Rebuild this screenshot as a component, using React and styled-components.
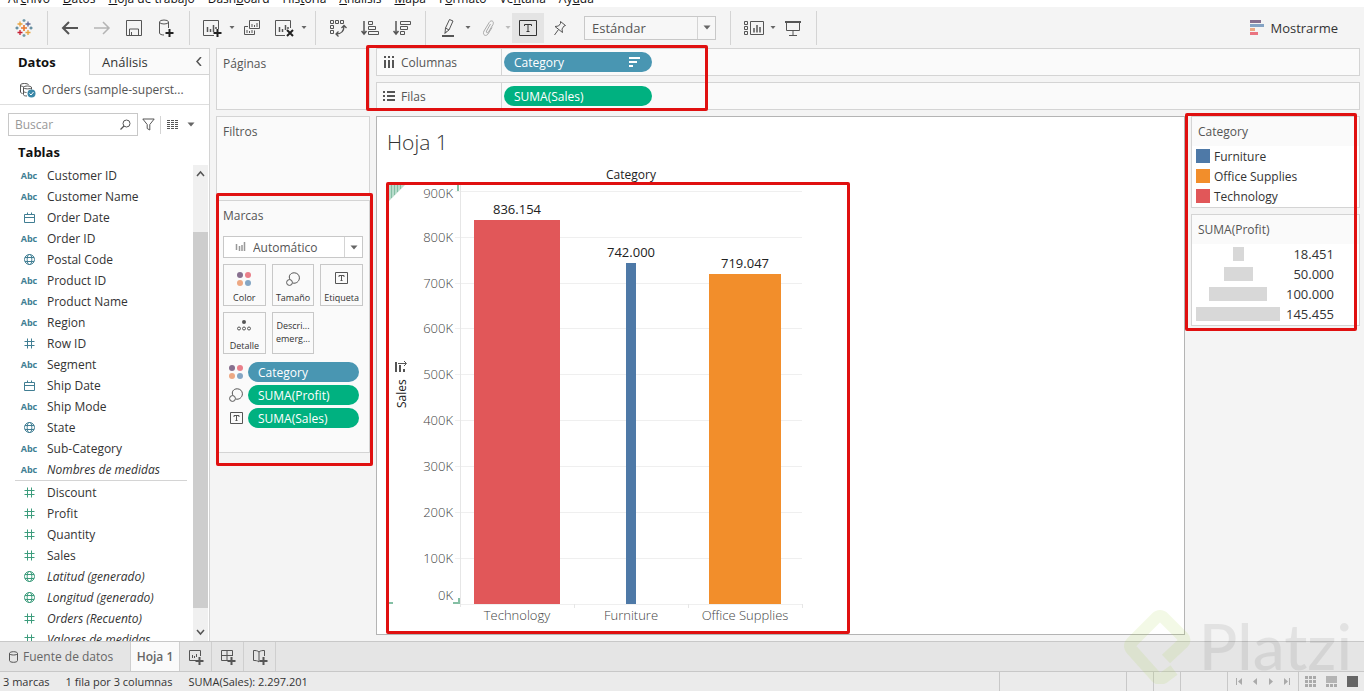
import React from 'react';
import styled, { createGlobalStyle, css } from 'styled-components';

const GlobalStyle = createGlobalStyle`
  * {
    box-sizing: border-box;
  }
  body {
    margin: 0;
    overflow: hidden;
  }
  body, button, input, select {
    font-family: 'Open Sans', 'Noto Sans', sans-serif;
    font-size: 12px;
    color: #333;
  }
  button {
    border: 0;
    padding: 0;
    background: none;
  }
  svg {
    display: block;
    flex: none;
  }
`;

const Page = styled.div`
  height: 100vh;
  display: flex;
  flex-direction: column;
  background: #f4f4f4;
  position: relative;
  overflow: hidden;
`;

const MenuBar = styled.nav`
  height: 7px;
  flex: none;
  display: flex;
  align-items: flex-end;
  gap: 13px;
  padding-left: 8px;
  background: #fff;
  overflow: hidden;
`;

const MenuItem = styled.a`
  color: #111;
  line-height: 16px;
  text-decoration: none;
  white-space: nowrap;
`;

const Toolbar = styled.div`
  height: 41px;
  flex: none;
  display: flex;
  align-items: center;
  padding-left: 8px;
  padding-right: 26px;
`;

const ToolButton = styled.button`
  width: 32px;
  height: 30px;
  display: flex;
  align-items: center;
  justify-content: center;
  background: ${props => (props.$active ? '#e4e4e4' : 'none')};
`;

const CaretButton = styled.button`
  width: 8px;
  height: 30px;
  display: flex;
  align-items: center;
  justify-content: center;
`;

const Separator = styled.div`
  width: 1px;
  height: 34px;
  margin: 0 6px 0 7px;
  background: #d4d4d4;
`;

const SelectBox = styled.label`
  position: relative;
  display: flex;
  height: ${props => (props.$small ? '22px' : '24px')};
  width: ${props => (props.$small ? '100%' : '132px')};
  margin: ${props => (props.$small ? '0' : '0 7px 0 8px')};
  background: ${props => (props.$small ? '#fff' : '#f7f7f7')};
  border: 1px solid #c8c8c8;

  select {
    flex: 1;
    appearance: none;
    border: 0;
    background: none;
    padding-left: ${props => (props.$small ? '29px' : '7px')};
    font-size: ${props => (props.$small ? '12px' : '13px')};
    color: #555;
  }
`;

const SelectIcon = styled.span`
  position: absolute;
  left: 11px;
  top: 4px;
`;

const SelectCaret = styled.span`
  position: absolute;
  right: 0;
  top: 0;
  bottom: 0;
  width: 18px;
  border-left: 1px solid #d4d4d4;
  display: flex;
  align-items: center;
  justify-content: center;
  pointer-events: none;
`;

const ShowMe = styled.button`
  margin-left: auto;
  display: flex;
  align-items: center;
  gap: 6px;
  font-size: 13px;
`;

const Body = styled.div`
  flex: 1;
  min-height: 0;
  display: flex;
`;

const Sidebar = styled.aside`
  width: 210px;
  flex: none;
  display: flex;
  flex-direction: column;
  background: #fff;
  border-right: 1px solid #d4d4d4;
  border-top: 1px solid #d4d4d4;
`;

const SideTabs = styled.div`
  display: flex;
  height: 26px;
  flex: none;
`;

const SideTab = styled.button`
  display: flex;
  align-items: center;
  font-size: 13px;

  ${props =>
    props.$active
      ? css`
          width: 89px;
          padding-left: 18px;
          font-weight: 700;
          color: #111;
        `
      : css`
          flex: 1;
          justify-content: space-between;
          padding: 0 6px 0 12px;
          background: #fafafa;
          border-left: 1px solid #d4d4d4;
          border-bottom: 1px solid #d4d4d4;
        `}
`;

const Source = styled.div`
  height: 30px;
  flex: none;
  display: flex;
  align-items: center;
  gap: 6px;
  padding-left: 19px;
  color: #555;
  border-bottom: 1px solid #dedede;
`;

const SearchRow = styled.div`
  display: flex;
  align-items: center;
  padding: 8px 8px 4px;
  flex: none;
`;

const SearchBox = styled.label`
  width: 130px;
  height: 23px;
  display: flex;
  align-items: center;
  padding: 0 6px;
  border: 1px solid #c8c8c8;

  input {
    flex: 1;
    width: 0;
    border: 0;
    padding: 0;
    outline: 0;
    background: none;
  }
  input::placeholder {
    color: #999;
    opacity: 1;
  }
`;

const IconButton = styled.button`
  height: 20px;
  display: flex;
  align-items: center;
  padding: 0 4px;
`;

const Divider = styled.div`
  width: 1px;
  height: 18px;
  margin: 0 2px 0 1px;
  background: #d4d4d4;
`;

const SideTitle = styled.h2`
  margin: 0;
  padding: 0 0 1px 18px;
  font-size: 13px;
  line-height: 24px;
  color: #111;
`;

const FieldArea = styled.div`
  flex: 1;
  min-height: 0;
  display: flex;
`;

const FieldList = styled.ul`
  flex: 1;
  margin: 0;
  padding: 0 6px 0 15px;
  list-style: none;
  overflow: hidden;
`;

const Field = styled.li`
  height: 21px;
  display: flex;
  align-items: center;
  font-style: ${props => (props.$generated ? 'italic' : 'normal')};
  color: #333;
`;

const FieldRule = styled.li`
  height: 2px;
  border-top: 1px solid #d4d4d4;
`;

const FieldIcon = styled.span`
  width: 28px;
  margin-right: 4px;
  display: flex;
  justify-content: center;
  font-size: 9px;
  font-weight: 700;
  font-style: normal;
  color: ${props => (props.$measure ? '#3c9c7c' : '#417e93')};
`;

const ScrollTrack = styled.div`
  width: 15px;
  margin-right: 1px;
  display: flex;
  flex-direction: column;
  background: #f0f0f0;
`;

const ScrollButton = styled.button`
  height: 17px;
  display: flex;
  align-items: center;
  justify-content: center;
`;

const ScrollSpace = styled.div`
  flex: ${props => props.$size};
  background: ${props => (props.$thumb ? '#cdcdcd' : 'none')};
`;

const Main = styled.main`
  flex: 1;
  min-width: 0;
  display: grid;
  grid-template-columns: 154px minmax(0, 1fr) 169px;
  grid-template-rows: 62px minmax(0, 1fr);
  gap: 6px;
  padding: 0 4px 6px 6px;
`;

const Card = styled.section`
  position: relative;
  height: ${props => props.$height || 'auto'};
  padding: 0 6px;
  background: #fafafa;
  border: 1px solid #d4d4d4;
`;

const CardTitle = styled.h3`
  margin: 0;
  font-size: 12px;
  font-weight: 400;
  line-height: 30px;
  color: #555;
`;

const Cards = styled.div`
  display: flex;
  flex-direction: column;
  gap: 6px;
`;

const Shelves = styled.div`
  position: relative;
  grid-column: 2 / 4;
  display: flex;
  flex-direction: column;
  gap: 6px;
`;

const Shelf = styled.div`
  height: 28px;
  display: flex;
  align-items: center;
  background: #fafafa;
  border: 1px solid #d4d4d4;
`;

const ShelfLabel = styled.div`
  width: 125px;
  height: 100%;
  margin-right: 2px;
  padding-left: 6px;
  display: flex;
  align-items: center;
  gap: 6px;
  color: #555;
  border-right: 1px solid #d4d4d4;
`;

const Pill = styled.button`
  width: ${props => props.$width};
  height: 20px;
  padding: 0 12px 0 10px;
  border-radius: 10px;
  display: flex;
  align-items: center;
  justify-content: space-between;
  font-weight: 500;
  color: #fff;
  background: ${props => (props.$measure ? '#00b180' : '#4996b2')};
`;

const MarkOptions = styled.div`
  padding-top: 5px;
`;

const MarkGrid = styled.div`
  display: grid;
  grid-template-columns: repeat(3, 1fr);
  gap: 6px;
  margin: 6px 0 8px;
`;

const MarkButton = styled.button`
  height: 42px;
  display: flex;
  flex-direction: column;
  align-items: center;
  justify-content: ${props => (props.$textOnly ? 'center' : 'space-between')};
  padding: ${props => (props.$textOnly ? '0 0 2px' : '7px 0 1px')};
  font-size: 9px;
  line-height: 13px;
  border: 1px solid #c8c8c8;
`;

const MarkRow = styled.div`
  display: flex;
  align-items: center;
  gap: 3px;
  margin-bottom: 3px;
`;

const MarkIcon = styled.span`
  width: 22px;
  padding-left: 4px;
  display: flex;
  justify-content: center;
`;

const Annotation = styled.div`
  position: absolute;
  inset: ${props => props.$inset};
  width: ${props => props.$width || 'auto'};
  border: 3px solid #e01010;
  border-radius: 2px;
  pointer-events: none;
`;

const Sheet = styled.section`
  position: relative;
  background: #fff;
  border: 1px solid #b4b4b4;
  padding: 11px 0 0 10px;
  overflow: hidden;
`;

const SheetTitle = styled.h1`
  margin: 0;
  font-size: 21px;
  font-weight: 300;
  line-height: 28px;
  color: #333;
`;

const ChartArea = styled.div`
  margin-top: 9px;
`;

const ChartText = styled.text`
  font-size: ${props => (props.$title ? '12px' : '13px')};
  font-weight: ${props => (props.$strong ? 400 : 300)};
  fill: ${props => (props.$strong ? '#222' : '#444')};
`;

const Legends = styled.div`
  position: relative;
  align-self: start;
  display: flex;
  flex-direction: column;
  gap: 6px;
`;

const Legend = styled.section`
  background: #fff;
  border: 1px solid #d4d4d4;
  padding-bottom: 1px;

  h3 {
    padding-left: 6px;
    line-height: 29px;
    background: #fafafa;
  }
`;

const LegendRow = styled.div`
  height: 20px;
  display: flex;
  align-items: center;
  gap: 4px;
  padding: 0 25px 0 4px;
`;

const Swatch = styled.span`
  width: 14px;
  height: 14px;
  background: ${props => props.$color};
`;

const SizeCell = styled.span`
  width: 84px;
  display: flex;
  justify-content: center;
`;

const SizeBar = styled.span`
  height: 14px;
  background: #d8d8d8;
`;

const SizeValue = styled.span`
  flex: 1;
  font-size: 13px;
  text-align: right;
`;

const SheetTabs = styled.div`
  height: 31px;
  flex: none;
  display: flex;
  background: #e5e5e5;
  border-top: 1px solid #c8c8c8;
  border-bottom: 1px solid #c8c8c8;
`;

const SheetTab = styled.button`
  width: ${props => props.$width};
  display: flex;
  align-items: center;
  justify-content: ${props => (props.$source ? 'flex-start' : 'center')};
  gap: 5px;
  padding-left: ${props => (props.$source ? '9px' : '0')};
  color: #666;
  font-weight: ${props => (props.$active ? 600 : 400)};
  background: ${props => (props.$active ? '#fafafa' : 'none')};
  border-right: 1px solid #cfcfcf;
`;

const StatusBar = styled.footer`
  height: 19px;
  flex: none;
  display: flex;
  align-items: center;
  gap: 16px;
  padding-left: 3px;
  background: #ebebeb;
  font-size: 11px;
`;

const StatusCells = styled.div`
  margin-left: auto;
  height: 100%;
  display: flex;
`;

const StatusCell = styled.div`
  width: ${props => props.$width};
  display: flex;
  align-items: center;
  justify-content: center;
  gap: ${props => props.$gap || '0'};
  border-left: 1px solid #c8c8c8;
`;

const Watermark = styled.div`
  position: absolute;
  right: 12px;
  bottom: 7px;
  display: flex;
  align-items: center;
  gap: 8px;
  font-family: Lato, sans-serif;
  font-size: 64px;
  font-weight: 500;
  line-height: 76px;
  color: rgba(0, 0, 0, 0.07);
  pointer-events: none;
`;

/* icons */

const Icon = ({ size = 18, w, h, color = '#555', stroke = 1, children }) => (
  <svg
    width={w || size}
    height={h || size}
    viewBox={`0 0 ${w || size} ${h || size}`}
    fill="none"
    stroke={color}
    strokeWidth={stroke}
    aria-hidden="true"
  >
    {children}
  </svg>
);

const Caret = ({ color = '#666', big }) => (
  <Icon w={8} h={5} color="none">
    <path d={big ? 'M0.500 0.500h7L4 4.500z' : 'M1.5 1h5L4 4z'} fill={color} />
  </Icon>
);

const LogoIcon = () => (
  <Icon size={18} stroke={1.3}>
    <path d="M9 6v6M6 9h6" stroke="#e8762d" strokeWidth="1.6" />
    <path d="M5 2.5v5M2.500 5h5M13 11v5M10.500 13.500h5" stroke="#e8a33d" />
    <path d="M13 2.500v5M10.500 5h5" stroke="#5c6692" />
    <path d="M5 11v5M2.500 13.500h5" stroke="#c72035" />
    <path d="M9 0v3M7.500 1.500h3M9 15v3M7.500 16.500h3" stroke="#7199a6" />
    <path d="M2 7.500v3M.5 9h3M16 7.500v3M14.500 9h3" stroke="#5b879b" />
  </Icon>
);

const ArrowIcon = ({ forward }) => (
  <Icon w={18} h={16} color={forward ? '#b4b4b4' : '#555'} stroke={forward ? 1.5 : 2}>
    <path d={forward ? 'M1 8h15M10 2l6 6-6 6' : 'M17 8H2M8 2L2 8l6 6'} />
  </Icon>
);

const SaveIcon = () => (
  <Icon size={18}>
    <path d="M1.500 1.500h15v15h-15zM4.500 16v-6h9v6M6.500 16v-3" />
  </Icon>
);

const AddDataIcon = () => (
  <Icon size={18}>
    <ellipse cx="7" cy="3" rx="4.500" ry="2" />
    <path d="M2.500 3v11c0 1.200 2 2 4.500 2M11.500 3v6" />
    <path d="M12.500 10v8M8.500 14h8" stroke="#222" strokeWidth="2" />
  </Icon>
);

const AddSheetIcon = () => (
  <Icon w={20} h={20}>
    <path d="M12 17.500H1.500v-15h15V11" />
    <path d="M5.500 9v5M8.500 11v3M11.500 7v7M14 9v2" strokeWidth="1.500" />
    <path d="M15.500 11v8M11.500 15h8" stroke="#222" strokeWidth="2" />
  </Icon>
);

const DuplicateIcon = () => (
  <Icon w={18} h={18}>
    <path d="M6.500 1.500h10v8h-10zM5 7.500H1.500v8h10v-4" />
    <path d="M9 5v3M11.500 6v2M14 4v4M4 11v3M6.500 12v2M9 11v3" />
  </Icon>
);

const ClearIcon = () => (
  <Icon w={20} h={20}>
    <path d="M11 17.500H1.500v-15h15V10" />
    <path d="M5.500 9v5M8.500 11v3M11.500 7v5M14 9v2" strokeWidth="1.500" />
    <path d="M13 12l6 6M19 12l-6 6" stroke="#222" strokeWidth="2" />
  </Icon>
);

const SwapIcon = () => (
  <Icon size={18}>
    <path d="M1.500 1.500h3v3h-3zM6.500 1.500h3v3h-3zM11.500 1.500h3v3h-3zM1.500 6.500h3v3h-3zM1.500 11.500h3v3h-3z" />
    <path d="M7 15c5 0 8-3 8-8M12.500 9L15 6.500 17.500 9M9.500 12.500L7 15l2.500 2.500" strokeWidth="1.300" />
  </Icon>
);

const SortIcon = ({ desc }) => (
  <Icon size={18}>
    <path d="M3 2v13M0.500 12L3 15l2.500-3" strokeWidth="1.500" />
    {desc ? (
      <path d="M7.500 2.500h10v3h-10zM7.500 7.500h7v3h-7zM7.500 12.500h4v3h-4z" />
    ) : (
      <path d="M7.500 2.500h4v3h-4zM7.500 7.500h7v3h-7zM7.500 12.500h10v3h-10z" />
    )}
  </Icon>
);

const PenIcon = () => (
  <Icon w={16} h={20}>
    <path d="M9.500 1.500l3.500 1.500-4 9-4 3 .5-5zM5.500 10l3.500 2M4.500 15.500l2-1.500" />
    <path d="M2 18h12" strokeWidth="2" />
  </Icon>
);

const ClipIcon = () => (
  <Icon w={14} h={18} color="#aaa">
    <path d="M9.500 5L5.500 12c-.8 1.800 1.200 2.600 2 1L12 5.500C13.500 2 10 .5 8.200 3.500L3 12c-2 4 2 6 4 3l4-6.500" />
  </Icon>
);

const TextIcon = ({ small }) =>
  small ? (
    <Icon w={13} h={12} color="#555">
      <path d="M.5 .5h12v11H.5zM4 5V3.500h5V5M6.500 3.500v5M5.500 8.500h2" />
    </Icon>
  ) : (
    <Icon w={18} h={16} color="#333">
      <path d="M.5 .5h17v15H.5zM5.500 6V4.500h7V6M9 4.500v7M7.500 11.500h3" />
    </Icon>
  );

const PinIcon = () => (
  <Icon w={14} h={16}>
    <path d="M7.500 1.500l5 4-1.500 .5-2 3 .5 3.500-7.500-6 3.500-.5 2-2.500zM5.500 9.500L1.500 15" />
  </Icon>
);

const ShowCardsIcon = () => (
  <Icon w={21} h={16}>
    <path d="M1.500 1.500h3v3h-3zM1.500 6.500h3v3h-3zM1.500 11.500h3v3h-3zM7.500 1.500h13v13h-13z" />
    <path d="M11 8v4.500M14 5v7.500M17 7v5.500" strokeWidth="1.500" />
  </Icon>
);

const PresentIcon = () => (
  <Icon w={18} h={18}>
    <path d="M1 3h16" strokeWidth="2" />
    <path d="M2.500 3v8.500h13V3M9 11.500V16M5 16.500h8" />
  </Icon>
);

const ShowMeIcon = () => (
  <Icon w={14} h={16} color="none">
    <path d="M0 0h11v3H0z" fill="#87708f" />
    <path d="M0 4h14v3H0z" fill="#84a3c4" />
    <path d="M0 8h5v3H0z" fill="#eaa884" />
    <path d="M0 12h8v3H0z" fill="#ea7480" />
  </Icon>
);

const SourceIcon = () => (
  <Icon w={17} h={16}>
    <path d="M3.500 11.500c-1.300-.3-2-.8-2-1.500V3c0-2 8-2 8 0M1.500 3c0 1 1.500 1.500 3 1.500M4.500 5.500v7c0 1.200 1.500 1.500 3.500 1.500M4.500 5.500c0-2 8-2 8 0v2M4.500 5.500c0 1.800 8 1.800 8 0M4.500 9c0 1 1.500 1.500 3 1.500" />
    <circle cx="12.500" cy="11.500" r="4" fill="#3b88a8" stroke="none" />
    <path d="M10.500 11.500l1.500 1.500 2.500-3" stroke="#fff" />
  </Icon>
);

const SearchIcon = () => (
  <Icon w={11} h={11}>
    <circle cx="6.500" cy="4.500" r="3.500" />
    <path d="M4 7L.5 10.500" strokeWidth="1.300" />
  </Icon>
);

const FilterIcon = () => (
  <Icon w={13} h={13}>
    <path d="M.8 1h11.400L7.800 6.500V12L5.200 10.500v-4z" />
  </Icon>
);

const ListIcon = () => (
  <Icon w={12} h={10}>
    <path
      d="M0 .5h12M0 2.500h12M0 4.500h12M0 6.500h12M0 8.500h12"
      strokeDasharray="3 1"
    />
  </Icon>
);

const Chevron = ({ d }) => (
  <Icon w={9} h={9} stroke={1.5}>
    <path d={d} />
  </Icon>
);

const HashIcon = () => (
  <Icon w={11} h={11} color="currentColor">
    <path d="M3.500 .5v10M7.500 .5v10M.5 3.500h10M.5 7.500h10" />
  </Icon>
);

const CalendarIcon = () => (
  <Icon w={11} h={11} color="currentColor">
    <path d="M.5 2.500h10v8H.5zM.5 5.500h10M3.500 .5v2M7.500 .5v2" />
  </Icon>
);

const GlobeIcon = () => (
  <Icon w={11} h={11} color="currentColor">
    <circle cx="5.500" cy="5.500" r="5" />
    <ellipse cx="5.500" cy="5.500" rx="2.300" ry="5" />
    <path d="M1 3.500h9M1 7.500h9" />
  </Icon>
);

const ColorIcon = () => (
  <Icon w={14} h={14} color="none">
    <circle cx="3" cy="3" r="3" fill="#87708f" />
    <circle cx="11" cy="3" r="3" fill="#ea7f8a" />
    <circle cx="3" cy="11" r="3" fill="#eda883" />
    <circle cx="11" cy="11" r="3" fill="#84a6c4" />
  </Icon>
);

const SizeIcon = () => (
  <Icon w={14} h={14}>
    <path d="M4 7.500C2 4 4.500 .8 8.200 .8c3 0 5.200 2.200 5.200 5 0 3.600-3.400 6.200-6.700 5.200" />
    <circle cx="3.500" cy="10.500" r="2.900" />
  </Icon>
);

const DetailIcon = () => (
  <Icon w={14} h={11}>
    <circle cx="7" cy="2" r="2" fill="#555" stroke="none" />
    <circle cx="2" cy="8.500" r="1.500" />
    <circle cx="7" cy="8.500" r="1.500" />
    <circle cx="12" cy="8.500" r="1.500" />
  </Icon>
);

const BarsIcon = () => (
  <Icon w={11} h={11} color="#999">
    <path d="M1.500 3v6M4.500 5v5M7 4v6M9.500 1v9" strokeWidth="1.500" />
  </Icon>
);

const ColumnsIcon = () => (
  <Icon w={12} h={12} stroke={2}>
    <path d="M2 0v2M6 0v2M10 0v2M2 4v8M6 4v8M10 4v8" />
  </Icon>
);

const RowsIcon = () => (
  <Icon w={12} h={12} stroke={2}>
    <path d="M0 2h2M0 6h2M0 10h2M4 2h8M4 6h8M4 10h8" />
  </Icon>
);

const PillSortIcon = () => (
  <Icon w={11} h={10} color="#fff" stroke={2}>
    <path d="M0 1h11M0 5h8M0 9h4" />
  </Icon>
);

const DatabaseIcon = () => (
  <Icon w={9} h={12}>
    <path d="M.5 2.500v7c0 2.400 8 2.400 8 0v-7c0-2.400-8-2.400-8 0c0 2 8 2 8 0" />
  </Icon>
);

const NewTabIcon = ({ children }) => (
  <Icon w={16} h={16}>
    {children}
    <path d="M11.500 8v8M7.500 12h8" strokeWidth="2" />
  </Icon>
);

/* data */

const menu = [
  ['Ar', 'c', 'hivo'],
  ['', 'D', 'atos'],
  ['', 'H', 'oja de trabajo'],
  ['Dash', 'b', 'oard'],
  ['His', 't', 'oria'],
  ['', 'A', 'nálisis'],
  ['', 'M', 'apa'],
  ['F', 'o', 'rmato'],
  ['Ve', 'n', 'tana'],
  ['Ay', 'u', 'da'],
];

const dimensions = [
  ['Customer ID', 'abc'],
  ['Customer Name', 'abc'],
  ['Order Date', 'date'],
  ['Order ID', 'abc'],
  ['Postal Code', 'geo'],
  ['Product ID', 'abc'],
  ['Product Name', 'abc'],
  ['Region', 'abc'],
  ['Row ID', 'number'],
  ['Segment', 'abc'],
  ['Ship Date', 'date'],
  ['Ship Mode', 'abc'],
  ['State', 'geo'],
  ['Sub-Category', 'abc'],
  ['Nombres de medidas', 'abc', true],
];

const measures = [
  ['Discount', 'number'],
  ['Profit', 'number'],
  ['Quantity', 'number'],
  ['Sales', 'number'],
  ['Latitud (generado)', 'geo', true],
  ['Longitud (generado)', 'geo', true],
  ['Orders (Recuento)', 'number', true],
  ['Valores de medidas', 'number', true],
];

const fieldIcons = {
  abc: 'Abc',
  date: <CalendarIcon />,
  geo: <GlobeIcon />,
  number: <HashIcon />,
};

const bars = [
  { name: 'Technology', sales: 836.154, profit: 145.455, color: '#e15759' },
  { name: 'Furniture', sales: 742, profit: 18.451, color: '#4e79a7' },
  { name: 'Office Supplies', sales: 719.047, profit: 122.49, color: '#f28e2b' },
];

const legendColors = [
  ['Furniture', '#4e79a7'],
  ['Office Supplies', '#f28e2b'],
  ['Technology', '#e15759'],
];

const sizes = [18.451, 50, 100, 145.455];
const ticks = [0, 100, 200, 300, 400, 500, 600, 700, 800, 900];

function FieldItem({ field, measure }) {
  const [name, type, generated] = field;
  return (
    <Field $generated={generated}>
      <FieldIcon $measure={measure}>{fieldIcons[type]}</FieldIcon>
      {name}
    </Field>
  );
}

function DataPane() {
  return (
    <Sidebar>
      <SideTabs>
        <SideTab $active>Datos</SideTab>
        <SideTab>
          Análisis <Chevron d="M7 0L3 4.500 7 9" />
        </SideTab>
      </SideTabs>
      <Source>
        <SourceIcon />
        Orders (sample-superst...
      </Source>
      <SearchRow>
        <SearchBox>
          <input type="text" placeholder="Buscar" aria-label="Buscar" />
          <SearchIcon />
        </SearchBox>
        <IconButton aria-label="Filtrar">
          <FilterIcon />
        </IconButton>
        <Divider />
        <IconButton aria-label="Vista">
          <ListIcon />
        </IconButton>
        <IconButton aria-label="Opciones">
          <Caret big />
        </IconButton>
      </SearchRow>
      <SideTitle>Tablas</SideTitle>
      <FieldArea>
        <FieldList>
          {dimensions.map(field => (
            <FieldItem key={field[0]} field={field} />
          ))}
          <FieldRule />
          {measures.map(field => (
            <FieldItem key={field[0]} field={field} measure />
          ))}
        </FieldList>
        <ScrollTrack>
          <ScrollButton aria-label="Subir">
            <Chevron d="M1 7l3.500-4L8 7" />
          </ScrollButton>
          <ScrollSpace $size={50} />
          <ScrollSpace $size={375} $thumb />
          <ScrollSpace $size={16} />
          <ScrollButton aria-label="Bajar">
            <Chevron d="M1 2l3.500 4L8 2" />
          </ScrollButton>
        </ScrollTrack>
      </FieldArea>
    </Sidebar>
  );
}

function TopToolbar() {
  return (
    <Toolbar>
      <ToolButton aria-label="Inicio"><LogoIcon /></ToolButton>
      <Separator />
      <ToolButton aria-label="Deshacer"><ArrowIcon /></ToolButton>
      <ToolButton aria-label="Rehacer"><ArrowIcon forward /></ToolButton>
      <ToolButton aria-label="Guardar"><SaveIcon /></ToolButton>
      <ToolButton aria-label="Nueva fuente"><AddDataIcon /></ToolButton>
      <Separator />
      <ToolButton aria-label="Nueva hoja"><AddSheetIcon /></ToolButton>
      <CaretButton aria-label="Más hojas"><Caret /></CaretButton>
      <ToolButton aria-label="Duplicar"><DuplicateIcon /></ToolButton>
      <ToolButton aria-label="Borrar"><ClearIcon /></ToolButton>
      <CaretButton aria-label="Más borrar"><Caret /></CaretButton>
      <Separator />
      <ToolButton aria-label="Intercambiar"><SwapIcon /></ToolButton>
      <ToolButton aria-label="Orden ascendente"><SortIcon /></ToolButton>
      <ToolButton aria-label="Orden descendente"><SortIcon desc /></ToolButton>
      <Separator />
      <ToolButton aria-label="Resaltar"><PenIcon /></ToolButton>
      <CaretButton aria-label="Más resaltar"><Caret /></CaretButton>
      <ToolButton aria-label="Agrupar"><ClipIcon /></ToolButton>
      <CaretButton aria-label="Más agrupar"><Caret color="#bbb" /></CaretButton>
      <ToolButton $active aria-label="Etiquetas"><TextIcon /></ToolButton>
      <ToolButton aria-label="Fijar"><PinIcon /></ToolButton>
      <SelectBox>
        <select aria-label="Ajuste">
          <option>Estándar</option>
        </select>
        <SelectCaret><Caret big /></SelectCaret>
      </SelectBox>
      <Separator />
      <ToolButton aria-label="Tarjetas"><ShowCardsIcon /></ToolButton>
      <CaretButton aria-label="Más tarjetas"><Caret /></CaretButton>
      <ToolButton aria-label="Presentación"><PresentIcon /></ToolButton>
      <Separator />
      <ShowMe>
        <ShowMeIcon />
        Mostrarme
      </ShowMe>
    </Toolbar>
  );
}

function MarksCard() {
  return (
    <Card $height="253px">
      <CardTitle>Marcas</CardTitle>
      <MarkOptions>
        <SelectBox $small>
          <SelectIcon><BarsIcon /></SelectIcon>
          <select aria-label="Tipo de marca">
            <option>Automático</option>
          </select>
          <SelectCaret><Caret big /></SelectCaret>
        </SelectBox>
        <MarkGrid>
          <MarkButton><ColorIcon />Color</MarkButton>
          <MarkButton><SizeIcon />Tamaño</MarkButton>
          <MarkButton><TextIcon small />Etiqueta</MarkButton>
          <MarkButton><DetailIcon />Detalle</MarkButton>
          <MarkButton $textOnly>
            <span>Descri...</span>
            <span>emerg...</span>
          </MarkButton>
        </MarkGrid>
        <MarkRow>
          <MarkIcon><ColorIcon /></MarkIcon>
          <Pill $width="111px">Category</Pill>
        </MarkRow>
        <MarkRow>
          <MarkIcon><SizeIcon /></MarkIcon>
          <Pill $width="111px" $measure>SUMA(Profit)</Pill>
        </MarkRow>
        <MarkRow>
          <MarkIcon><TextIcon small /></MarkIcon>
          <Pill $width="111px" $measure>SUMA(Sales)</Pill>
        </MarkRow>
      </MarkOptions>
      <Annotation $inset="-8px -4px -14px -1px" />
    </Card>
  );
}

// plot box inside the chart drawing
const LEFT = 73;
const COL = 114;
const BASE = 439;
const y = value => BASE - value * 0.4592;

function BarChart() {
  return (
    <svg width="430" height="462" aria-label="Ventas por categoría">
      <ChartText $strong $title x={LEFT + COL * 1.5} y="14" textAnchor="middle">
        Category
      </ChartText>
      <path d="M2 20h16L2 36z" fill="#b9dccc" />
      <path d="M4.500 20v13M7.500 20v10M10.500 20v7M13.500 20v4" stroke="#84bfa4" />
      {ticks.map(t => (
        <g key={t}>
          <path
            d={`M${t ? LEFT - 5 : LEFT} ${Math.round(y(t)) + 0.5}H${LEFT + COL * 3}`}
            stroke="#efefef"
          />
          <ChartText
            x={LEFT - 7}
            y={t === 0 ? 435 : t === 900 ? 33 : Math.round(y(t)) + 5}
            textAnchor="end"
          >
            {t}K
          </ChartText>
        </g>
      ))}
      <path d={`M${LEFT + 0.5} 20V${BASE + 3}`} stroke="#e6e6e6" />
      {bars.map((bar, i) => {
        const center = LEFT + COL * (i + 0.5);
        const width = Math.floor(bar.profit * 0.592);
        const top = Math.round(y(bar.sales));
        return (
          <g key={bar.name}>
            <rect
              x={Math.round(center - width / 2)}
              y={top}
              width={width || 1}
              height={BASE - top}
              fill={bar.color}
            />
            <ChartText $strong x={center} y={top - 6} textAnchor="middle">
              {bar.sales.toFixed(3)}
            </ChartText>
            <ChartText x={center} y="455" textAnchor="middle">
              {bar.name}
            </ChartText>
            <path d={`M${LEFT + COL * (i + 1) + 0.5} ${BASE}v4`} stroke="#e6e6e6" />
          </g>
        );
      })}
      <path d="M71 20v6M66 438h6v-5M0 438h6" stroke="#84bfa4" strokeWidth="2" fill="none" />
      <ChartText $strong $title transform="translate(19 243) rotate(-90)">
        Sales
      </ChartText>
      <path d="M9 197v10M13 200v7M17 204v3" stroke="#555" strokeWidth="2" />
      <path d="M11 198.500h8M17 196l2.500 2.500L17 201" stroke="#555" fill="none" />
    </svg>
  );
}

function LegendsPane() {
  return (
    <Legends>
      <Legend>
        <CardTitle>Category</CardTitle>
        {legendColors.map(([name, color]) => (
          <LegendRow key={name}>
            <Swatch $color={color} />
            {name}
          </LegendRow>
        ))}
      </Legend>
      <Legend>
        <CardTitle>SUMA(Profit)</CardTitle>
        {sizes.map(size => (
          <LegendRow key={size}>
            <SizeCell>
              <SizeBar style={{ width: Math.round(size * 0.58) }} />
            </SizeCell>
            <SizeValue>{size.toFixed(3)}</SizeValue>
          </LegendRow>
        ))}
      </Legend>
      <Annotation $inset="-3px 3px -5px -6px" />
    </Legends>
  );
}

function App() {
  return (
    <Page>
      <GlobalStyle />
      <MenuBar>
        {menu.map(([before, key, after]) => (
          <MenuItem href="#" key={before + key + after}>
            {before}
            <u>{key}</u>
            {after}
          </MenuItem>
        ))}
      </MenuBar>
      <TopToolbar />
      <Body>
        <DataPane />
        <Main>
          <Card>
            <CardTitle>Páginas</CardTitle>
          </Card>
          <Shelves>
            <Shelf>
              <ShelfLabel><ColumnsIcon />Columnas</ShelfLabel>
              <Pill $width="148px">
                Category <PillSortIcon />
              </Pill>
            </Shelf>
            <Shelf>
              <ShelfLabel><RowsIcon />Filas</ShelfLabel>
              <Pill $width="148px" $measure>SUMA(Sales)</Pill>
            </Shelf>
            <Annotation $inset="-3px auto -1px -10px" $width="342px" />
          </Shelves>
          <Cards>
            <Card $height="78px">
              <CardTitle>Filtros</CardTitle>
            </Card>
            <MarksCard />
          </Cards>
          <Sheet>
            <SheetTitle>Hoja 1</SheetTitle>
            <ChartArea>
              <BarChart />
            </ChartArea>
            <Annotation $inset="65px auto 0 9px" $width="464px" />
          </Sheet>
          <LegendsPane />
        </Main>
      </Body>
      <SheetTabs>
        <SheetTab $width="131px" $source><DatabaseIcon />Fuente de datos</SheetTab>
        <SheetTab $width="49px" $active>Hoja 1</SheetTab>
        <SheetTab $width="32px" aria-label="Nueva hoja de trabajo">
          <NewTabIcon>
            <path d="M8 11.500H1.500v-10h11V7M4.500 6v3M6.500 7v2M8.500 5v3" />
          </NewTabIcon>
        </SheetTab>
        <SheetTab $width="32px" aria-label="Nuevo dashboard">
          <NewTabIcon>
            <path d="M8 11.500H1.500v-10h11V7M7 1.500v10M1.500 6.500h11" />
          </NewTabIcon>
        </SheetTab>
        <SheetTab $width="32px" aria-label="Nueva historia">
          <NewTabIcon>
            <path d="M1.500 1.500c2 0 4 0 5.500 1.500 1.500-1.500 3.500-1.500 5.500-1.500V7M1.500 1.500v10c2 0 4 0 5.500 1.500V3" />
          </NewTabIcon>
        </SheetTab>
      </SheetTabs>
      <StatusBar>
        <span>3 marcas</span>
        <span>1 fila por 3 columnas</span>
        <span>SUMA(Sales): 2.297.201</span>
        <StatusCells>
          <StatusCell $width="127px" />
          <StatusCell $width="27px" />
          <StatusCell $width="27px" />
          <StatusCell $width="47px" />
          <StatusCell $width="71px" $gap="10px">
            <Icon w={6} h={7} color="#aaa"><path d="M.5 0v7" /><path d="M6 0v7L2 3.500z" fill="#aaa" stroke="none" /></Icon>
            <Icon w={6} h={7} color="none"><path d="M5 0v7L1 3.500z" fill="#aaa" /></Icon>
            <Icon w={6} h={7} color="none"><path d="M1 0v7l4-3.500z" fill="#aaa" /></Icon>
            <Icon w={6} h={7} color="#aaa"><path d="M5.500 0v7" /><path d="M0 0v7l4-3.500z" fill="#aaa" stroke="none" /></Icon>
          </StatusCell>
          <StatusCell $width="66px" $gap="10px">
            <Icon w={11} h={11} color="#aaa" stroke={3}><path d="M0 1.500h11M0 5.500h11M0 9.500h11" strokeDasharray="3 1" /></Icon>
            <Icon w={11} h={11} color="#aaa" stroke={3}><path d="M0 9.500h11" strokeDasharray="3 1" /><path d="M0 0h11v7H0z" fill="#b4b4b4" stroke="none" /></Icon>
            <Icon w={11} h={11} color="none"><path d="M0 0h11v11H0z" fill="#666" /></Icon>
          </StatusCell>
        </StatusCells>
      </StatusBar>
      <Watermark>
        <svg width="70" height="76" viewBox="0 0 70 76" fill="none" aria-hidden="true">
          <path
            d="M53 62L42 70q-4 2-7-1L11 42q-4-4 0-8L35 10q4-4 8 0L62 29q3 3 0 6L45 51"
            stroke="#a0cd3c"
            strokeOpacity="0.13"
            strokeWidth="12"
          />
        </svg>
        Platzi
      </Watermark>
    </Page>
  );
}

export default App;
